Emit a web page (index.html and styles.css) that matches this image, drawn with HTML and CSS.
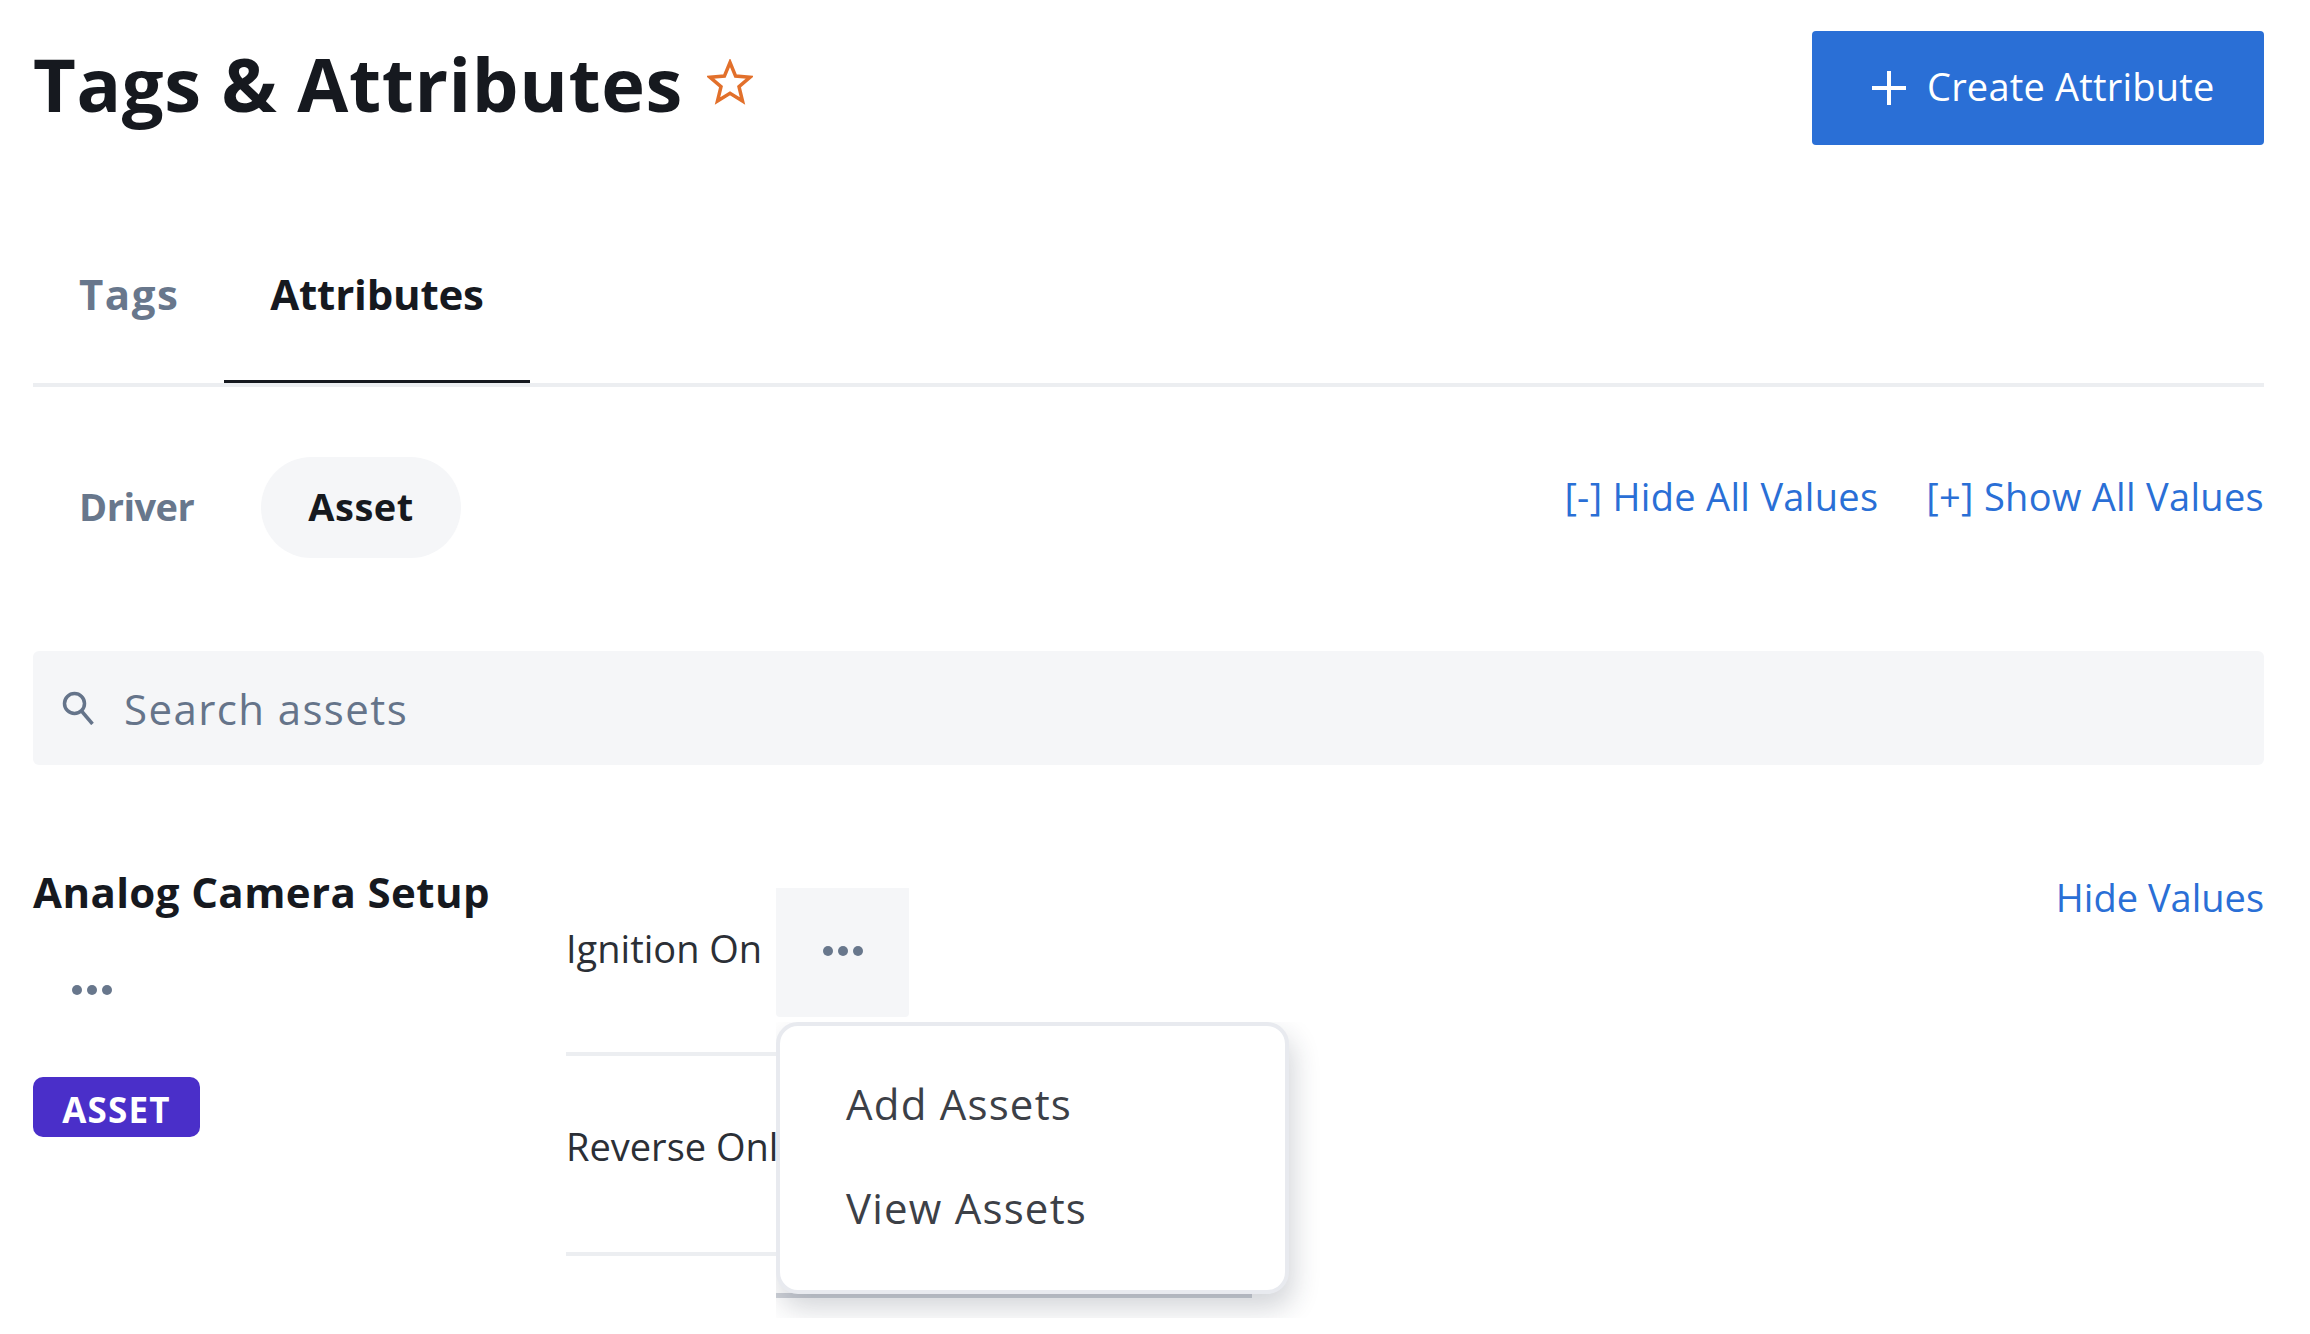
FILE: index.html
```html
<!DOCTYPE html>
<html lang="en">
<head>
<meta charset="utf-8">
<title>Tags &amp; Attributes</title>
<link rel="stylesheet" href="styles.css">
</head>
<body>
<main class="page">
  <header class="header">
    <div class="title-wrap">
      <h1 class="title">Tags &amp; Attributes</h1>
      <svg class="star" viewBox="0 0 46 46" aria-hidden="true"><path d="M23 3.5l5.6 13.6 14.6 1.1-11.2 9.5 3.5 14.3L23 34.3l-12.5 7.7L14 27.7 2.800 18.200l14.600-1.100z"/></svg>
    </div>
    <button class="create">
      <svg class="plus" viewBox="0 0 34 34" aria-hidden="true"><path d="M17 0v34M0 17h34"/></svg>
      <span class="create-label">Create Attribute</span>
    </button>
  </header>

  <nav class="tabs">
    <a class="tab tab-tags">Tags</a>
    <a class="tab tab-active">Attributes</a>
  </nav>

  <div class="filter-row">
    <div class="pills">
      <span class="pill pill-driver">Driver</span>
      <span class="pill pill-active">Asset</span>
    </div>
    <div class="links">
      <a class="link">[-] Hide All Values</a>
      <a class="link">[+] Show All Values</a>
    </div>
  </div>

  <div class="search">
    <svg class="search-icon" viewBox="0 0 32 34" aria-hidden="true"><circle cx="12.500" cy="12.500" r="10"/><path d="M19.500 20l11 13"/></svg>
    <span class="search-text">Search assets</span>
  </div>

  <section class="group">
    <div class="group-side">
      <h2 class="group-title">Analog Camera Setup</h2>
      <div class="side-dots"><i></i><i></i><i></i></div>
      <span class="badge">ASSET</span>
    </div>
    <div class="rows">
      <div class="row row-first">
        <span class="row-label">Ignition On</span>
        <div class="more"><i></i><i></i><i></i></div>
      </div>
      <div class="row row-second">
        <span class="row-label">Reverse Only</span>
      </div>
      <div class="menu-clip">
        <div class="menu-line"></div>
        <div class="menu">
          <a class="menu-item">Add Assets</a>
          <a class="menu-item">View Assets</a>
        </div>
      </div>
    </div>
    <a class="link hide-values">Hide Values</a>
  </section>
</main>
</body>
</html>
```
FILE: styles.css
```css
* { box-sizing: border-box; }
html, body { margin: 0; background: #fff; }
body { height: 1334px; overflow: hidden; font-family: "Open Sans", "Liberation Sans", sans-serif; color: #16191f; }
.page { padding: 31px 46px 0 33px; display: flex; flex-direction: column; }

.header { display: flex; justify-content: space-between; align-items: flex-start; height: 114px; }
.title-wrap { display: flex; align-items: center; gap: 24px; height: 105px; }
.title { margin: 0; font-size: 74px; font-weight: 700; line-height: 1; letter-spacing: .6px; color: #16191f; }
.star { width: 46px; height: 46px; fill: none; stroke: #e2702b; stroke-width: 3.500; margin-top: -3px; }
.create { width: 452px; height: 114px; border: 0; border-radius: 4px; background: #2a6fd6; color: #fff; display: flex; align-items: center; padding: 0 0 4px 60px; gap: 21px; font: inherit; }
.plus { width: 34px; height: 34px; fill: none; stroke: #fff; stroke-width: 4; margin-top: 4px; }
.create-label { font-size: 38px; letter-spacing: .2px; }

.tabs { display: flex; height: 242px; align-items: flex-end; border-bottom: 4px solid #eceef1; }
.tab { height: 118px; padding: 4px 46px 0; font-size: 42px; font-weight: 700; line-height: 50px; border-bottom: 3px solid transparent; }
.tab-tags { color: #68778c; padding-right: 45px; letter-spacing: 1.500px; }
.tab-active { border-bottom-color: #16191f; color: #16191f; letter-spacing: -.2px; }

.filter-row { display: flex; justify-content: space-between; align-items: flex-start; margin-top: 70px; }
.pills { display: flex; gap: 20px; }
.pill { height: 101px; padding: 0 47px 3px; border-radius: 51px; display: flex; align-items: center; font-size: 38px; font-weight: 700; color: #68778c; }
.pill-driver { letter-spacing: -.5px; padding-left: 46px; }
.pill-active { background: #f5f6f8; color: #16191f; letter-spacing: .5px; }
.links { display: flex; gap: 48px; padding-top: 15px; }
.link { font-size: 38px; line-height: 48px; letter-spacing: .3px; color: #2a6fd6; }

.search { height: 114px; margin-top: 93px; background: #f5f6f8; border-radius: 6px; display: flex; align-items: center; padding-left: 29px; gap: 30px; }
.search-icon { width: 32px; height: 34px; fill: none; stroke: #65748a; stroke-width: 3.500; }
.search-text { font-size: 42px; letter-spacing: 1.400px; color: #65748a; }

.group { display: flex; margin-top: 123px; align-items: flex-start; }
.group-side { width: 533px; flex: none; display: flex; flex-direction: column; align-items: flex-start; }
.group-title { margin: -21px 0 2px; font-size: 42px; line-height: 50px; font-weight: 700; letter-spacing: .4px; color: #16191f; }
.side-dots, .more { display: flex; gap: 5px; }
.side-dots i, .more i { width: 10px; height: 10px; border-radius: 50%; background: #68778c; }
.side-dots { margin: 66px 0 0 39px; }
.badge { margin-top: 82px; width: 167px; height: 60px; background: #4a2fc9; border-radius: 10px; color: #fff; font-size: 35px; font-weight: 700; letter-spacing: 1.200px; display: flex; align-items: center; justify-content: center; padding-top: 4px; }

.rows { position: relative; width: 686px; flex: none; }
.row { display: flex; border-bottom: 4px solid #eceef1; }
.row-first { height: 168px; }
.row-second { height: 200px; padding-top: 66px; }
.row-label { width: 210px; flex: none; white-space: nowrap; font-size: 38px; line-height: 48px; color: #2b2f36; }
.row-first .row-label { padding-top: 36px; }
.more { width: 133px; height: 129px; background: #f5f6f8; border-radius: 0 0 4px 4px; align-items: center; justify-content: center; padding-bottom: 4px; }

.menu-clip { position: absolute; left: 210px; top: 134px; width: 544px; height: 296px; overflow: hidden; }
.menu-line { position: absolute; left: 0; top: 271px; width: 476px; height: 5px; background: #cfd2d8; }
.menu { position: relative; width: 513px; height: 272px; background: #fff; border: 4px solid #e8eaef; border-radius: 22px; box-shadow: 4px 14px 28px rgba(30, 40, 60, .2); padding: 53px 0 0 66px; display: flex; flex-direction: column; gap: 54px; }
.menu-item { font-size: 42px; line-height: 50px; letter-spacing: 1.200px; color: #3c4047; }

.hide-values { margin-left: auto; margin-top: -15px; letter-spacing: 0; }
```
